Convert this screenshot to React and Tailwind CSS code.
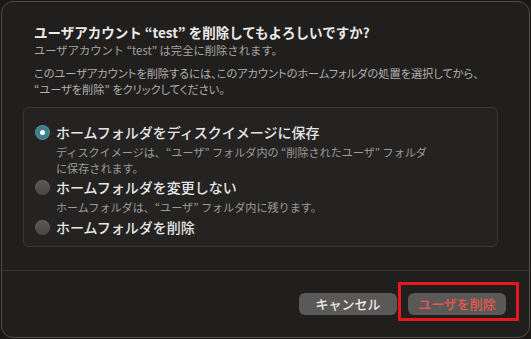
import React from "react";

const font = { fontFamily: '"Noto Sans CJK JP", "Noto Sans", sans-serif' };

const Radio = ({ checked }) =>
    checked ? (
        <span className="flex h-[15px] w-[15px] shrink-0 items-center justify-center rounded-full bg-[#3d7f8b] shadow-[inset_0_0_0_1px_rgba(255,255,255,0.12)]">
            <span className="h-[5px] w-[5px] rounded-full bg-white" />
        </span>
    ) : (
        <span className="h-[15px] w-[15px] shrink-0 rounded-full bg-gradient-to-b from-[#5a5958] to-[#474645] shadow-[inset_0_0_0_1px_rgba(255,255,255,0.06)]" />
    );

const Option = ({ checked, label, children }) => (
    <div>
        <div className="flex h-[22px] items-center gap-[6px] pl-[11px]">
            <Radio checked={checked} />
            <span className="text-[14px] font-medium text-[#e6e6e6]">{label}</span>
        </div>
        {children && (
            <div className="mt-[1px] pl-[32px] text-[11.1px] leading-[16px] text-[#9c9b9a]">
                {children}
            </div>
        )}
    </div>
);

export default function App() {
    return (
        <div className="h-[339px] w-[531px] bg-[#1a1918] pl-[1px] pt-[1px]" style={font}>
            <div className="relative flex h-[337px] w-[529px] flex-col rounded-[12px] border border-[#4e4d4c] bg-[#201f1d]">
                <div className="px-[32px] pt-[20px]">
                    <h1 className="text-[13.5px] font-bold leading-[20px] text-[#ececec]">
                        ユーザアカウント “test” を削除してもよろしいですか?
                    </h1>
                    <p className="text-[11.3px] leading-[17px] text-[#a6a5a4]">
                        ユーザアカウント “test” は完全に削除されます。
                    </p>
                    <p className="mt-[6px] text-[11.2px] leading-[16px] text-[#b0afae] [font-feature-settings:'palt']">
                        このユーザアカウントを削除するには、このアカウントのホームフォルダの処置を選択してから、
                        <br />
                        “ユーザを削除” をクリックしてください。
                    </p>
                </div>

                <div className="ml-[21px] mt-[10px] w-[475px] rounded-[6px] border border-[#393836] bg-[#242321] pb-[8px] pt-[13px]">
                    <Option checked label="ホームフォルダをディスクイメージに保存">
                        ディスクイメージは、“ユーザ” フォルダ内の “削除されたユーザ” フォルダ
                        <br />
                        に保存されます。
                    </Option>
                    <Option label="ホームフォルダを変更しない">
                        ホームフォルダは、“ユーザ” フォルダ内に残ります。
                    </Option>
                    <div className="pt-[1px]">
                        <Option label="ホームフォルダを削除" />
                    </div>
                </div>

                <div className="mt-auto h-[67px] border-t border-[#353432]">
                    <div className="flex justify-end gap-[11px] pr-[23px] pt-[22px]">
                        <button className="h-[22px] w-[98px] rounded-[6px] bg-[#5a5958] text-[13px] font-medium text-[#ececec]">
                            キャンセル
                        </button>
                        <button className="h-[22px] w-[98px] rounded-[6px] bg-[#5a5958] text-[13px] font-medium text-[#e8584f]">
                            ユーザを削除
                        </button>
                    </div>
                </div>

                <div className="pointer-events-none absolute left-[396px] top-[280px] h-[39px] w-[121px] border-[3px] border-[#e8161f]" />
            </div>
        </div>
    );
}
